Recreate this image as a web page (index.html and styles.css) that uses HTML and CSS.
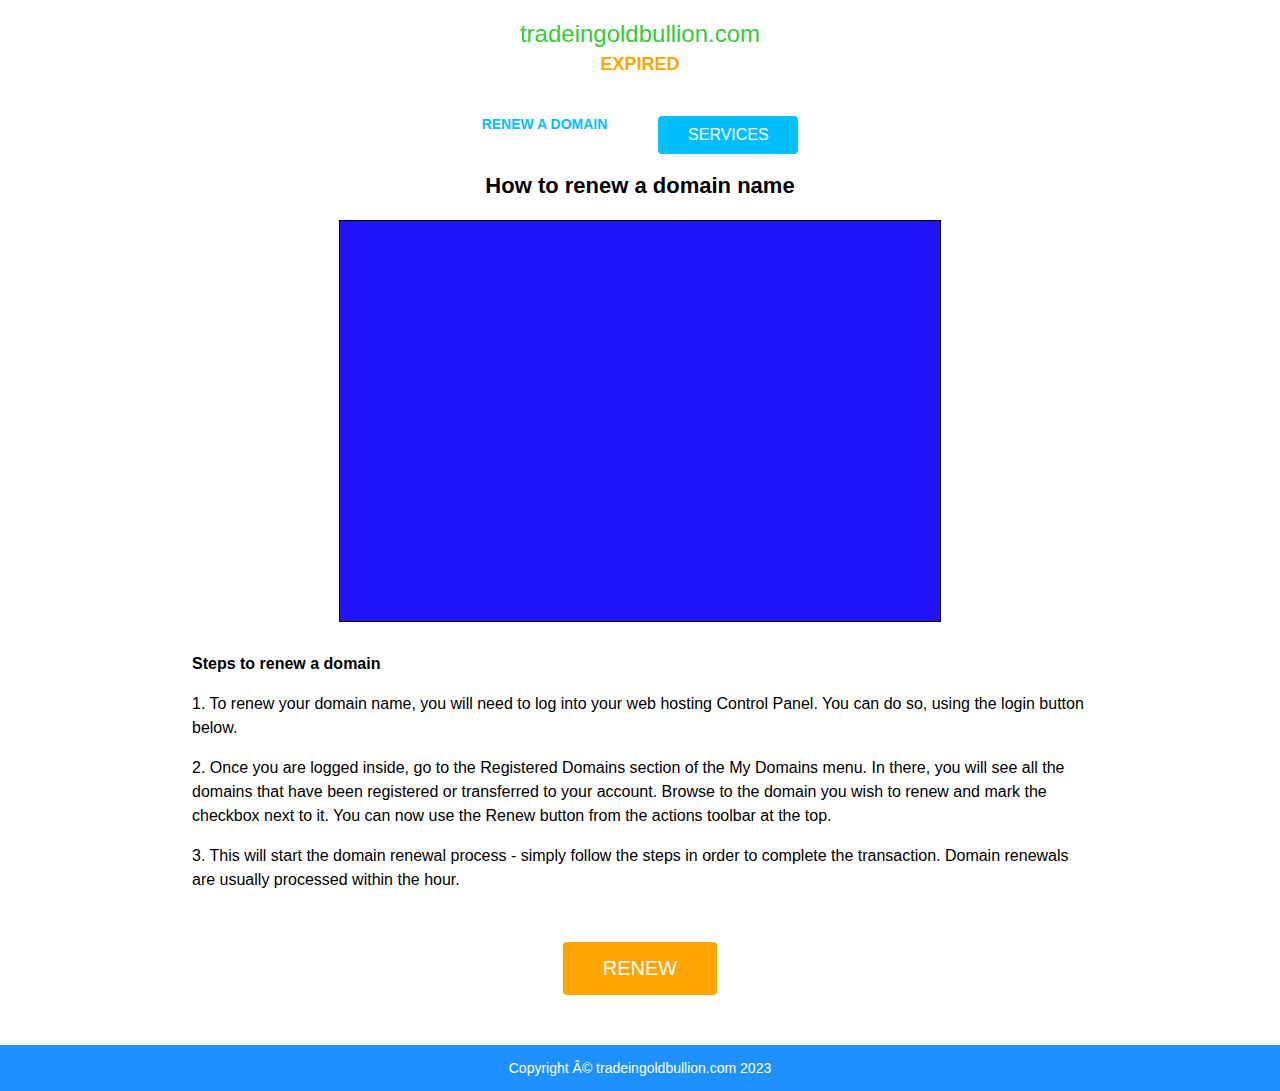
FILE: index.html
```
<!DOCTYPE html>
<html>
<head>
<meta charset="utf-8">
<title>tradeingoldbullion.com</title>
<link rel="stylesheet" href="styles.css">
</head>
<body>
<div class="page">
  <header class="header">
    <div class="domain">tradeingoldbullion.com</div>
    <div class="status">EXPIRED</div>
  </header>
  <nav class="nav">
    <a class="nav-link" href="#">RENEW A DOMAIN</a>
    <a class="nav-btn" href="#">SERVICES</a>
  </nav>
  <h2 class="title">How to renew a domain name</h2>
  <div class="video"></div>
  <section class="content">
    <p class="steps-title">Steps to renew a domain</p>
    <p>1. To renew your domain name, you will need to log into your web hosting Control Panel. You can do so, using the login button below.</p>
    <p>2. Once you are logged inside, go to the Registered Domains section of the My Domains menu. In there, you will see all the domains that have been registered or transferred to your account. Browse to the domain you wish to renew and mark the checkbox next to it. You can now use the Renew button from the actions toolbar at the top.</p>
    <p>3. This will start the domain renewal process - simply follow the steps in order to complete the transaction. Domain renewals are usually processed within the hour.</p>
  </section>
  <div class="cta">
    <a class="renew-btn" href="#">RENEW</a>
  </div>
</div>
<footer class="footer">Copyright Â© tradeingoldbullion.com 2023</footer>
</body>
</html>
```
FILE: styles.css
```
* { box-sizing: border-box; }
html, body { margin: 0; padding: 0; }
body {
  font-family: "Liberation Sans", Arial, sans-serif;
  color: #000;
  background: #fff;
}
.page { min-height: 1045px; }
.header {
  text-align: center;
  padding-top: 20px;
}
.domain {
  font-size: 24px;
  line-height: 28px;
  color: #33cc33;
}
.status {
  font-size: 18px;
  font-weight: bold;
  line-height: 22px;
  color: #ffa500;
  margin-top: 5px;
}
.nav {
  display: flex;
  justify-content: center;
  align-items: flex-start;
  gap: 51px;
  margin-top: 41px;
}
.nav-link {
  font-size: 14px;
  font-weight: bold;
  color: #00bfff;
  text-decoration: none;
  line-height: 16px;
  margin-top: 0;
}
.nav-btn {
  display: block;
  width: 140px;
  height: 38px;
  line-height: 38px;
  text-align: center;
  background: #00bfff;
  color: #fff;
  font-size: 16px;
  border-radius: 4px;
  text-decoration: none;
}
.title {
  text-align: center;
  font-size: 22px;
  font-weight: bold;
  margin: 19px 0 0;
  line-height: 26px;
}
.video {
  width: 602px;
  height: 402px;
  margin: 21px auto 0;
  border: 1px solid #000;
  background: #2013f9;
}
.content {
  width: 896px;
  margin: 30px auto 0;
  font-size: 16px;
  line-height: 24px;
}
.content p { margin: 0 0 16px; }
.content .steps-title {
  font-size: 16px;
  font-weight: bold;
  margin-bottom: 16px;
}
.cta {
  display: flex;
  justify-content: center;
  margin-top: 50px;
}
.renew-btn {
  display: block;
  width: 154px;
  height: 53px;
  line-height: 53px;
  text-align: center;
  background: #ffa500;
  color: #fff;
  font-size: 20px;
  border-radius: 4px;
  text-decoration: none;
}
.footer {
  height: 46px;
  line-height: 46px;
  background: #1e90ff;
  color: #fff;
  text-align: center;
  font-size: 14px;
}
```
